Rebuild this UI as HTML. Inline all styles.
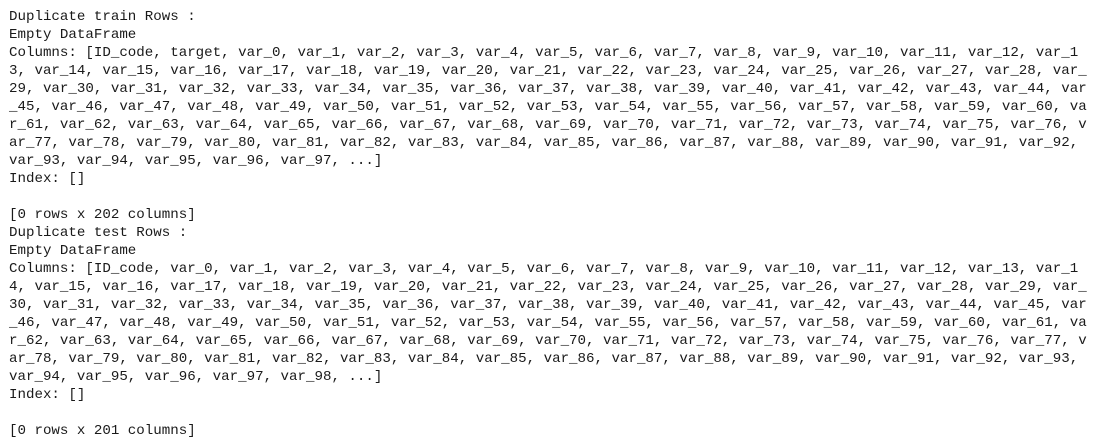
<!DOCTYPE html>
<html><head><meta charset="utf-8"><style>
html,body{margin:0;padding:0;background:#fff;width:1096px;height:443px;overflow:hidden}
pre{margin:0;position:absolute;left:9px;top:8px;font-family:"Liberation Mono",monospace;font-size:14.15px;line-height:18px;color:#1a1a1a;white-space:pre}
</style></head><body>
<pre>Duplicate train Rows :
Empty DataFrame
Columns: [ID_code, target, var_0, var_1, var_2, var_3, var_4, var_5, var_6, var_7, var_8, var_9, var_10, var_11, var_12, var_1
3, var_14, var_15, var_16, var_17, var_18, var_19, var_20, var_21, var_22, var_23, var_24, var_25, var_26, var_27, var_28, var_
29, var_30, var_31, var_32, var_33, var_34, var_35, var_36, var_37, var_38, var_39, var_40, var_41, var_42, var_43, var_44, var
_45, var_46, var_47, var_48, var_49, var_50, var_51, var_52, var_53, var_54, var_55, var_56, var_57, var_58, var_59, var_60, va
r_61, var_62, var_63, var_64, var_65, var_66, var_67, var_68, var_69, var_70, var_71, var_72, var_73, var_74, var_75, var_76, v
ar_77, var_78, var_79, var_80, var_81, var_82, var_83, var_84, var_85, var_86, var_87, var_88, var_89, var_90, var_91, var_92,
var_93, var_94, var_95, var_96, var_97, ...]
Index: []

[0 rows x 202 columns]
Duplicate test Rows :
Empty DataFrame
Columns: [ID_code, var_0, var_1, var_2, var_3, var_4, var_5, var_6, var_7, var_8, var_9, var_10, var_11, var_12, var_13, var_1
4, var_15, var_16, var_17, var_18, var_19, var_20, var_21, var_22, var_23, var_24, var_25, var_26, var_27, var_28, var_29, var_
30, var_31, var_32, var_33, var_34, var_35, var_36, var_37, var_38, var_39, var_40, var_41, var_42, var_43, var_44, var_45, var
_46, var_47, var_48, var_49, var_50, var_51, var_52, var_53, var_54, var_55, var_56, var_57, var_58, var_59, var_60, var_61, va
r_62, var_63, var_64, var_65, var_66, var_67, var_68, var_69, var_70, var_71, var_72, var_73, var_74, var_75, var_76, var_77, v
ar_78, var_79, var_80, var_81, var_82, var_83, var_84, var_85, var_86, var_87, var_88, var_89, var_90, var_91, var_92, var_93,
var_94, var_95, var_96, var_97, var_98, ...]
Index: []

[0 rows x 201 columns]</pre>
</body></html>
